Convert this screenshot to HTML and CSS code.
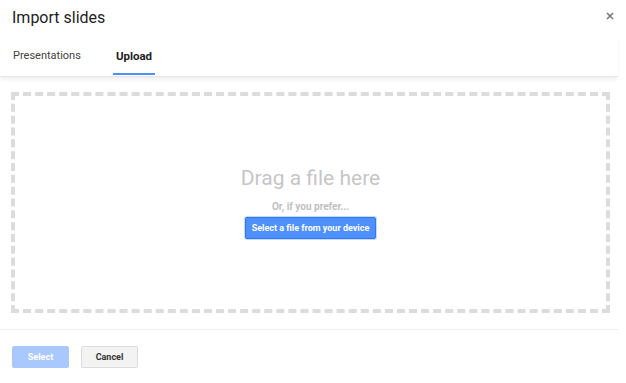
FILE: index.html
```html
<html>
    <head>
        <link rel="stylesheet" href="styles.css">
    </head>
    <body>
        <div class="dialog">
            <div class="title-bar">
                <span class="title">Import slides</span>
                <span class="close">
                    <svg width="8" height="8" viewBox="0 0 8 8"><path d="M1 1L7 7M7 1L1 7" stroke="#777" stroke-width="1.6"/></svg>
                </span>
            </div>
            <div class="tabs">
                <div class="tab">Presentations</div>
                <div class="tab active">Upload</div>
            </div>
            <div class="content">
                <div class="dropzone">
                    <div class="drag-text">Drag a file here</div>
                    <div class="prefer">Or, if you prefer...</div>
                    <button class="btn-blue">Select a file from your device</button>
                </div>
            </div>
            <div class="footer">
                <button class="btn btn-select">Select</button>
                <button class="btn btn-cancel">Cancel</button>
            </div>
        </div>
    </body>
</html>
```

FILE: styles.css
```css
*{
    box-sizing: border-box;
}
body{
    margin: 0px;
    background: white;
    font-family: Roboto, Arial, sans-serif;
}
.dialog{
    width: 618px;
}
.title-bar{
    display: flex;
    justify-content: space-between;
    align-items: center;
    height: 34px;
    padding: 0px 4px 0px 12px;
}
.title{
    font-size: 16px;
    color: #222;
}
.close{
    display: flex;
    margin-top: -3px;
}
.tabs{
    display: flex;
    height: 43px;
    padding-left: 13px;
    border-bottom: 1px solid #e6e6e6;
    box-shadow: 0px 3px 4px -1px rgba(0,0,0,0.08);
}
.tab{
    font-size: 11px;
    color: #444;
    padding-top: 15px;
    margin-right: 35px;
}
.tab.active{
    font-weight: bold;
    font-size: 11.5px;
    color: #222;
    border-bottom: 2px solid #4d90fe;
    padding: 15px 3px 0px 3px;
    margin-left: -3px;
    height: 41px;
}
.content{
    padding: 15px 8px 16px 11px;
    border-bottom: 1px solid #eeeeee;
}
.dropzone{
    height: 221px;
    border: 4px dashed #dcdcdc;
    display: flex;
    flex-direction: column;
    align-items: center;
    justify-content: center;
}
.drag-text{
    font-size: 21px;
    color: #c6c6c6;
    margin-bottom: 11px;
    margin-top: -1px;
}
.prefer{
    font-size: 10px;
    font-weight: bold;
    color: #c0c0c0;
    margin-bottom: 5px;
}
.btn-blue{
    font-family: Roboto, Arial, sans-serif;
    font-size: 9px;
    font-weight: bold;
    color: white;
    background: #4d90fe;
    border: 1px solid #3079ed;
    border-radius: 2px;
    height: 22px;
    padding: 0px 6px;
    box-shadow: 0px 0px 0px 1px #c6dafc;
}
.footer{
    display: flex;
    gap: 12px;
    padding: 16px 12px;
}
.btn{
    font-family: Roboto, Arial, sans-serif;
    font-size: 9px;
    font-weight: bold;
    height: 22px;
    width: 57px;
    border-radius: 2px;
}
.btn-select{
    background: #a9c9fe;
    border: 1px solid #a9c9fe;
    color: white;
}
.btn-cancel{
    background: #f3f3f3;
    border: 1px solid #dcdcdc;
    color: #333;
}
```
